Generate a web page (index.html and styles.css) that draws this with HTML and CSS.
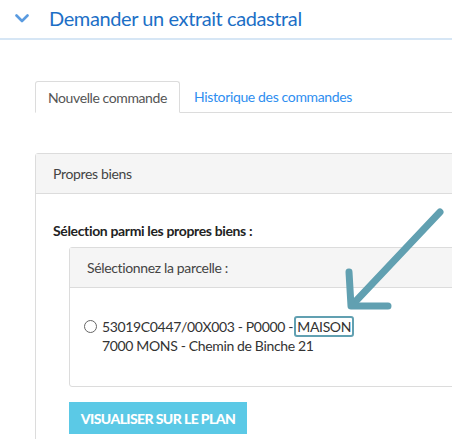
FILE: index.html
```html
<!DOCTYPE html>
<html lang="fr">
<head>
<meta charset="utf-8">
<link rel="stylesheet" href="styles.css">
</head>
<body>
<div class="page">
  <div class="header">
    <svg class="chevron" width="14" height="9" viewBox="0 0 14 9"><path d="M1.5 1.5 L7 7 L12.5 1.5" fill="none" stroke="#5a9be0" stroke-width="2.6" stroke-linecap="round" stroke-linejoin="round"/></svg>
    <span class="title">Demander un extrait cadastral</span>
  </div>
  <div class="content">
    <div class="tabs">
      <div class="tab active">Nouvelle commande</div>
      <div class="tab link">Historique des commandes</div>
    </div>
    <div class="panel">
      <div class="panel-heading">Propres biens</div>
      <div class="panel-body">
        <div class="label">Sélection parmi les propres biens :</div>
        <div class="inner">
          <div class="inner-heading">Sélectionnez la parcelle :</div>
          <div class="inner-body">
            <label class="option">
              <span class="radio"></span>
              <span class="option-text">53019C0447/00X003 - P0000 - <span class="mark">MAISON</span><br>7000 MONS - Chemin de Binche 21</span>
            </label>
          </div>
        </div>
        <button class="btn">VISUALISER SUR LE PLAN</button>
      </div>
    </div>
  </div>
  <svg class="arrow" width="452" height="439" viewBox="0 0 452 439">
    <g fill="none" stroke="#61a0b1" stroke-width="7" stroke-linecap="round" stroke-linejoin="round">
      <path d="M440 212 L355 302"/>
      <path d="M349 272 L351 306 L388 306"/>
    </g>
  </svg>
</div>
</body>
</html>
```
FILE: styles.css
```css
* { box-sizing: border-box; }
html, body { margin: 0; padding: 0; background: #fff; }
body { font-family: Lato, "Open Sans", sans-serif; color: #333; letter-spacing: -0.35px; }
.page { position: relative; width: 452px; height: 439px; overflow: hidden; }
.header {
  height: 40px;
  border-bottom: 2px solid #d6e6f5;
  display: flex;
  align-items: center;
  padding-left: 15px;
}
.chevron { margin-right: 20px; margin-top: -2px; }
.title { font-size: 20px; color: #1c6fc6; margin-top: -2px; letter-spacing: -0.4px; }
.content { padding: 41px 0 0 35px; }
.tabs { display: flex; border-bottom: 1px solid #dcdcdc; height: 32px; }
.tab { font-size: 14px; padding: 0 12px; line-height: 31px; }
.tab.active {
  border: 1px solid #dcdcdc;
  border-bottom: 1px solid #fff;
  border-radius: 3px 3px 0 0;
  color: #555;
  background: #fff;
  height: 32px;
  letter-spacing: -0.4px;
}
.tab.link { color: #2e8ef0; padding-left: 14px; }
.panel {
  margin-top: 40px;
  border: 1px solid #dcdcdc;
  border-radius: 3px 0 0 0;
  margin-right: -20px;
  height: 320px;
}
.panel-heading {
  height: 40px;
  background: #f5f5f5;
  border-bottom: 1px solid #dcdcdc;
  padding-left: 17px;
  line-height: 39px;
  font-size: 14px;
  color: #444;
}
.panel-body { padding: 20px 0 0 17px; }
.label { font-size: 14px; font-weight: bold; color: #222; line-height: 33px; }
.inner {
  margin-left: 16px;
  border: 1px solid #dcdcdc;
  border-radius: 3px 0 0 3px;
  height: 140px;
}
.inner-heading {
  height: 40px;
  background: #f5f5f5;
  border-bottom: 1px solid #dcdcdc;
  padding-left: 17px;
  line-height: 39px;
  font-size: 14px;
  color: #444;
}
.inner-body { padding: 29px 0 0 14px; }
.option { display: flex; align-items: flex-start; font-size: 14px; color: #333; line-height: 19px; }
.radio {
  width: 13px; height: 13px; border: 1px solid #666; border-radius: 50%;
  margin: 3px 5px 0 0; flex: none;
}
.mark {
  border: 2.5px solid #61a0b1;
  border-radius: 3px;
  padding: 0 1px;
  margin-left: -2px;
}
.btn {
  margin: 15px 0 0 16px;
  width: 178px; height: 32px;
  background: #5bc9e6;
  border: none;
  color: #fff;
  font-family: Lato, sans-serif;
  font-weight: 900;
  font-size: 14px;
  letter-spacing: -0.6px;
  padding: 0;
}
.arrow { position: absolute; left: 0; top: 0; pointer-events: none; }
```
